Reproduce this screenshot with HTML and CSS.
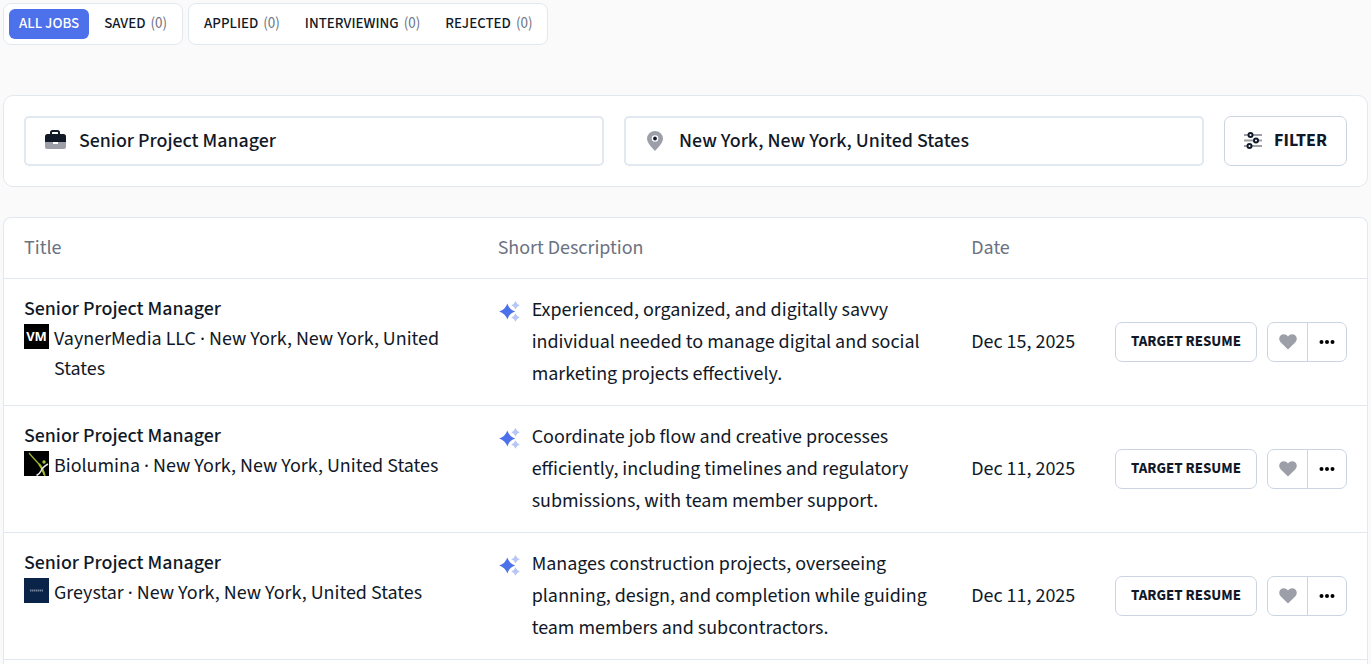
FILE: index.html
```html
<!DOCTYPE html>
<html lang="en">
<head>
    <meta charset="utf-8">
    <title>Job Search</title>
    <link rel="stylesheet" href="styles.css">
</head>
<body>
    <svg class="sprite" aria-hidden="true">
        <symbol id="sparkles" viewBox="0 0 22 22">
            <path fill="#4d70eb" d="M9.300 3.500Q11.300 9.600 17.200 11.500Q11.300 13.400 9.300 19.500Q7.300 13.400 1.200 11.500Q7.300 9.600 9.300 3.500Z"/>
            <path fill="#b8c6f7" d="M17.500 1Q18.700 4.300 21.800 5.200Q18.700 6.100 17.500 9.400Q16.300 6.100 13.200 5.200Q16.300 4.300 17.500 1ZM17.500 13.300Q18.700 16.600 21.800 17.500Q18.700 18.400 17.500 21.700Q16.300 18.400 13.200 17.500Q16.300 16.600 17.500 13.300Z"/>
        </symbol>
        <symbol id="heart" viewBox="0 0 18 16">
            <path fill="#9c9fa7" d="M9 15.500L1.600 8.200C-.3 6.200-.1 3.200 1.600 1.500C3.700-.5 7 .1 9 2.400C11-.1 14.300-.5 16.400 1.500C18.100 3.200 18.300 6.200 16.400 8.200Z"/>
        </symbol>
        <symbol id="dots" viewBox="0 0 16 4">
            <circle cx="2.500" cy="2" r="2"/>
            <circle cx="8" cy="2" r="2"/>
            <circle cx="13.500" cy="2" r="2"/>
        </symbol>
    </svg>

    <nav class="tabs">
        <div class="tab-group">
            <button type="button" class="tab active">ALL JOBS</button>
            <button type="button" class="tab">SAVED <span>(0)</span></button>
        </div>
        <div class="tab-group">
            <button type="button" class="tab">APPLIED <span>(0)</span></button>
            <button type="button" class="tab">INTERVIEWING <span>(0)</span></button>
            <button type="button" class="tab">REJECTED <span>(0)</span></button>
        </div>
    </nav>

    <form class="search">
        <label class="field" aria-label="Job title">
            <svg width="22" height="22" viewBox="0 0 22 22">
                <path fill="#111827" d="M1 12V6.500Q1 4 3.500 4H6V2.500Q6 0 8.500 0H13.500Q16 0 16 2.500V4H19.500Q22 4 22 6.500V12ZM8 4H14V2.500Q14 2 13.500 2H8.500Q8 2 8 2.500Z"/>
                <path fill="#9c9fa7" d="M1 12H9V14H14V12H22V17Q22 19 20 19H3Q1 19 1 17Z"/>
            </svg>
            <input type="text" value="Senior Project Manager">
        </label>
        <label class="field" aria-label="Location">
            <svg width="22" height="20" viewBox="0 0 22 20">
                <path fill="#9c9fa7" d="M11 20C8.500 17.300 3 12 3 7.800A8 7.800 0 0 1 19 7.800C19 12 13.500 17.300 11 20Z"/>
                <circle cx="11" cy="7.500" r="2.600" fill="#111827" stroke="#fff" stroke-width="1.400"/>
            </svg>
            <input type="text" value="New York, New York, United States">
        </label>
        <button type="button" class="btn filter">
            <svg width="18" height="18" viewBox="0 0 18 18" fill="none" stroke-width="2">
                <path stroke="#9c9fa7" d="M0 3H18M0 8.500H18M0 14H18"/>
                <g stroke="#111827" fill="#fff">
                    <circle cx="6.500" cy="3" r="2"/>
                    <circle cx="12" cy="8.500" r="2"/>
                    <circle cx="5.500" cy="14" r="2"/>
                </g>
            </svg>
            FILTER
        </button>
    </form>

    <main class="results">
        <table>
            <thead>
                <tr>
                    <th class="col-title">Title</th>
                    <th class="col-description">Short Description</th>
                    <th class="col-date">Date</th>
                    <th class="col-actions" aria-label="Actions"></th>
                </tr>
            </thead>
            <tbody>
                <tr>
                    <td>
                        <a href="#" class="job-title">Senior Project Manager</a>
                        <div class="company">
                            <span class="logo logo-vm">VM</span>
                            <span>VaynerMedia LLC · New York, New York, United States</span>
                        </div>
                    </td>
                    <td>
                        <div class="description">
                            <svg width="22" height="22"><use href="#sparkles"/></svg>
                            <span>Experienced, organized, and digitally savvy individual needed to manage digital and social marketing projects effectively.</span>
                        </div>
                    </td>
                    <td class="date">Dec 15, 2025</td>
                    <td class="date">
                        <div class="actions">
                            <button type="button" class="btn">TARGET RESUME</button>
                            <div class="btn-group">
                                <button type="button" aria-label="Save job"><svg width="18" height="16"><use href="#heart"/></svg></button>
                                <button type="button" aria-label="More"><svg width="16" height="4"><use href="#dots"/></svg></button>
                            </div>
                        </div>
                    </td>
                </tr>
                <tr>
                    <td>
                        <a href="#" class="job-title">Senior Project Manager</a>
                        <div class="company">
                            <svg class="logo" viewBox="0 0 25 25" fill="none">
                                <path fill="#000" d="M0 0H25V25H0Z"/>
                                <path stroke="#a3b92c" stroke-width="1.200" d="M5 2Q11 9 14.500 12.500Q18 16 21 25"/>
                                <path stroke="#a3b92c" stroke-width="2" d="M15 13Q18.500 17 20.500 24"/>
                                <path stroke="#e8e8e8" stroke-width="1.600" d="M24 13Q18.500 16 17 20Q15.500 23 12.500 24.500"/>
                                <circle cx="20" cy="11" r="1.700" fill="#a3c92c"/>
                            </svg>
                            <span>Biolumina · New York, New York, United States</span>
                        </div>
                    </td>
                    <td>
                        <div class="description">
                            <svg width="22" height="22"><use href="#sparkles"/></svg>
                            <span>Coordinate job flow and creative processes efficiently, including timelines and regulatory submissions, with team member support.</span>
                        </div>
                    </td>
                    <td class="date">Dec 11, 2025</td>
                    <td class="date">
                        <div class="actions">
                            <button type="button" class="btn">TARGET RESUME</button>
                            <div class="btn-group">
                                <button type="button" aria-label="Save job"><svg width="18" height="16"><use href="#heart"/></svg></button>
                                <button type="button" aria-label="More"><svg width="16" height="4"><use href="#dots"/></svg></button>
                            </div>
                        </div>
                    </td>
                </tr>
                <tr>
                    <td>
                        <a href="#" class="job-title">Senior Project Manager</a>
                        <div class="company">
                            <svg class="logo" viewBox="0 0 25 25">
                                <path fill="#0a2348" d="M0 0H25V25H0Z"/>
                                <path stroke="#71839a" stroke-width="2" stroke-dasharray="1.500 .5" d="M6 12.500H19"/>
                            </svg>
                            <span>Greystar · New York, New York, United States</span>
                        </div>
                    </td>
                    <td>
                        <div class="description">
                            <svg width="22" height="22"><use href="#sparkles"/></svg>
                            <span>Manages construction projects, overseeing planning, design, and completion while guiding team members and subcontractors.</span>
                        </div>
                    </td>
                    <td class="date">Dec 11, 2025</td>
                    <td class="date">
                        <div class="actions">
                            <button type="button" class="btn">TARGET RESUME</button>
                            <div class="btn-group">
                                <button type="button" aria-label="Save job"><svg width="18" height="16"><use href="#heart"/></svg></button>
                                <button type="button" aria-label="More"><svg width="16" height="4"><use href="#dots"/></svg></button>
                            </div>
                        </div>
                    </td>
                </tr>
            </tbody>
        </table>
    </main>
</body>
</html>
```
FILE: styles.css
```css
* {
    box-sizing: border-box;
}

body {
    display: flex;
    flex-direction: column;
    min-height: 100vh;
    margin: 0;
    padding: 3px 3px 0;
    background-color: #fafafa;
    color: #111827;
    font-family: "Source Sans 3", "Source Sans Pro", "Noto Sans CJK JP", sans-serif;
    font-size: 20px;
    line-height: 30px;
}

button, input {
    font: inherit;
    color: inherit;
}

button {
    cursor: pointer;
}

svg {
    display: block;
    flex-shrink: 0;
}

.sprite {
    display: none;
}

/* Tabs */
.tabs {
    display: flex;
    gap: 5px;
    margin-bottom: 50px;
}

.tab-group {
    display: flex;
    gap: 5px;
    padding: 5px;
    background-color: #fff;
    border: 1px solid #e2e8f0;
    border-radius: 8px;
}

.tab {
    height: 30px;
    padding: 0 10px;
    border: none;
    border-radius: 6px;
    background: none;
    font-size: 15px;
    font-weight: 500;
    line-height: 30px;
    white-space: nowrap;
}

.tab span {
    margin-left: 2px;
    color: #6b7280;
    font-weight: 400;
}

.tab.active {
    background-color: #4d70eb;
    color: #fff;
}

/* Search bar */
.search {
    display: flex;
    gap: 20px;
    margin-bottom: 30px;
    padding: 20px;
    background-color: #fff;
    border: 1px solid #e2e8f0;
    border-radius: 10px;
}

.field {
    display: flex;
    flex: 1;
    align-items: center;
    gap: 13px;
    height: 50px;
    padding: 0 18px;
    border: 2px solid #e2e8f0;
    border-radius: 5px;
}

.field input {
    flex: 1;
    min-width: 0;
    height: 30px;
    padding: 0;
    border: none;
    outline: none;
    background: none;
    font-weight: 500;
}

/* Buttons */
.btn {
    height: 40px;
    padding: 0 15px;
    border: 1px solid #cbd5e1;
    border-radius: 7px;
    background-color: #fff;
    font-size: 15px;
    font-weight: 700;
    white-space: nowrap;
}

.filter {
    display: flex;
    align-items: center;
    gap: 12px;
    height: 50px;
    padding: 0 19px;
    font-size: 18px;
}

.btn-group {
    display: flex;
    height: 40px;
    border: 1px solid #cbd5e1;
    border-radius: 7px;
}

.btn-group button {
    display: flex;
    align-items: center;
    justify-content: center;
    width: 39px;
    padding: 0;
    border: none;
    background: none;
}

.btn-group button + button {
    border-left: 1px solid #cbd5e1;
}

/* Job list */
.results {
    flex: 1;
    background-color: #fff;
    border: 1px solid #e2e8f0;
    border-bottom: none;
    border-radius: 8px 8px 0 0;
}

table {
    width: 100%;
    table-layout: fixed;
    border-collapse: separate;
    border-spacing: 0;
}

th, td {
    padding: 15px 20px;
    border-bottom: 1px solid #e2e8f0;
    text-align: left;
    vertical-align: top;
}

th {
    color: #6b7280;
    font-weight: 400;
}

td.date {
    padding-right: 0;
    vertical-align: middle;
    white-space: nowrap;
}

td.date:last-child {
    padding: 15px 20px 15px 0;
}

.col-title, .col-description {
    width: 34.75%;
}

.col-date {
    width: 10%;
}

.job-title {
    display: block;
    color: inherit;
    font-weight: 500;
    text-decoration: none;
}

.company {
    display: flex;
    gap: 5px;
}

.logo {
    flex-shrink: 0;
    width: 25px;
    height: 25px;
}

.logo-vm {
    background-color: #000;
    color: #fff;
    font-family: "Open Sans", sans-serif;
    font-size: 13px;
    font-weight: 700;
    line-height: 25px;
    text-align: center;
}

.description {
    display: flex;
    gap: 12px;
    line-height: 32px;
}

.description svg {
    margin-top: 6px;
}

.actions {
    display: flex;
    justify-content: flex-end;
    gap: 10px;
}
```
